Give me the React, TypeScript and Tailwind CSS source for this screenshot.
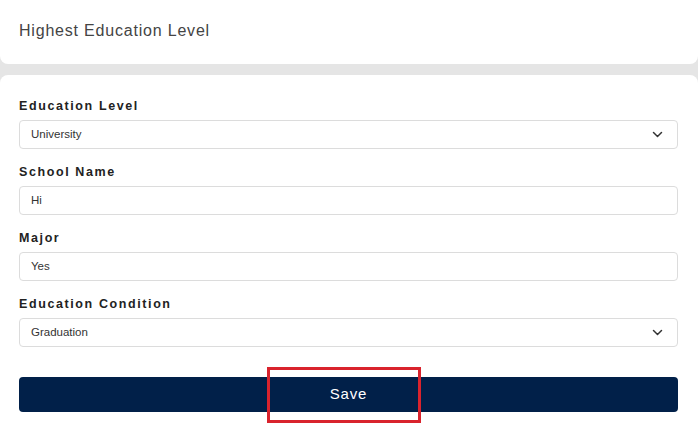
import React from "react";

function Chevron() {
  return (
    <svg width="11" height="7" viewBox="0 0 11 7" fill="none" className="shrink-0">
      <path d="M1.5 1.5 L5.5 5.5 L9.5 1.5" stroke="#333" strokeWidth="1.5" strokeLinecap="round" strokeLinejoin="round" />
    </svg>
  );
}

function Field({ label, value, select }: { label: string; value: string; select?: boolean }) {
  return (
    <div className="flex flex-col">
      <div className="h-[20px] flex items-center text-[12.5px] font-bold tracking-[1.6px] text-[#222]">{label}</div>
      <div className="mt-[4px] h-[29px] rounded-[4px] border border-[#dcdcdc] bg-white flex items-center pl-[11px] pr-[14px]">
        <span className="flex-1 text-[11.5px] text-[#333]">{value}</span>
        {select && <Chevron />}
      </div>
    </div>
  );
}

export default function App() {
  return (
    <div className="w-[698px] h-[427px] overflow-hidden bg-[#e5e5e5] flex flex-col" style={{ fontFamily: '"Liberation Sans", Arial, sans-serif' }}>
      <div className="h-[64px] shrink-0 bg-white rounded-b-[8px] flex items-center pl-[19px]">
        <span className="text-[16px] tracking-[0.8px] text-[#444] mt-[-3px]">Highest Education Level</span>
      </div>
      <div className="mt-[11px] flex-1 bg-white rounded-t-[8px] pl-[19px] pr-[20px] pt-[21px]">
        <div className="flex flex-col gap-[13px]">
          <Field label="Education Level" value="University" select />
          <Field label="School Name" value="Hi" />
          <Field label="Major" value="Yes" />
          <Field label="Education Condition" value="Graduation" select />
        </div>
        <div className="relative mt-[30px]">
          <button className="w-full h-[35px] rounded-[4px] bg-[#012049] text-white text-[15px] tracking-[0.8px] flex items-center justify-center">
            Save
          </button>
          <div className="absolute left-[248px] top-[-10px] w-[154px] h-[56px] border-[3px] border-[#d9232d] pointer-events-none" />
        </div>
      </div>
    </div>
  );
}
